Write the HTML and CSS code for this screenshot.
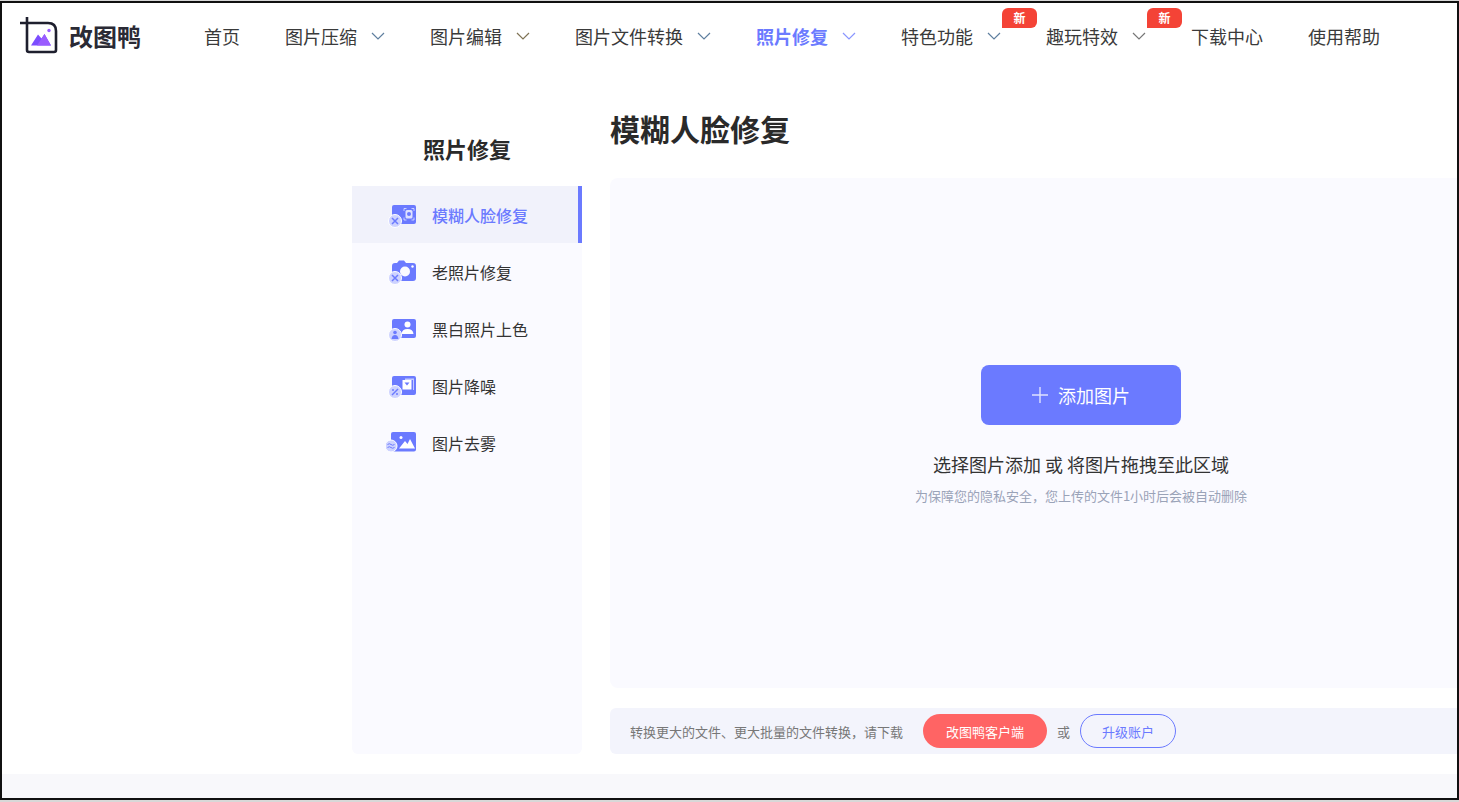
FILE: index.html
```html
<!DOCTYPE html>
<html lang="zh-CN">
<head>
<meta charset="utf-8">
<title>改图鸭 - 模糊人脸修复</title>
<link rel="stylesheet" href="styles.css">
</head>
<body>
<div class="frame">
  <header class="header">
    <a class="logo">
      <svg class="logo-icon" width="38" height="37" viewBox="0 0 38 37">
        <path d="M0 6H28Q36 6 36 14V33Q36 35 34 35H9Q7 35 7 33V0" fill="none" stroke="#1e1f2e" stroke-width="2.6"/>
        <path d="M11 28.500L18 17.500L21.500 21.500L24.500 17L31 28.500Z" fill="#7c4dff"/>
        <path d="M17 28.500L24.500 17L31 28.500Z" fill="#9a5cff"/>
        <circle cx="29" cy="13.500" r="1.700" fill="#9a5cff"/>
      </svg>
      <span class="logo-text">改图鸭</span>
    </a>
    <nav class="nav">
      <a class="nav-item">首页</a>
      <a class="nav-item has-caret">图片压缩<svg class="caret" width="14" height="8" viewBox="0 0 14 8"><path d="M1 1L7 7L13 1" fill="none" stroke="#5f7f9f" stroke-width="1.200"/></svg></a>
      <a class="nav-item has-caret">图片编辑<svg class="caret" width="14" height="8" viewBox="0 0 14 8"><path d="M1 1L7 7L13 1" fill="none" stroke="#7f7355" stroke-width="1.200"/></svg></a>
      <a class="nav-item has-caret">图片文件转换<svg class="caret" width="14" height="8" viewBox="0 0 14 8"><path d="M1 1L7 7L13 1" fill="none" stroke="#5f7f9f" stroke-width="1.200"/></svg></a>
      <a class="nav-item has-caret is-active">照片修复<svg class="caret" width="14" height="8" viewBox="0 0 14 8"><path d="M1 1L7 7L13 1" fill="none" stroke="#8a96ff" stroke-width="1.200"/></svg></a>
      <a class="nav-item has-caret">特色功能<svg class="caret" width="14" height="8" viewBox="0 0 14 8"><path d="M1 1L7 7L13 1" fill="none" stroke="#5f7f9f" stroke-width="1.200"/></svg><span class="badge">新</span></a>
      <a class="nav-item has-caret">趣玩特效<svg class="caret" width="14" height="8" viewBox="0 0 14 8"><path d="M1 1L7 7L13 1" fill="none" stroke="#777" stroke-width="1.200"/></svg><span class="badge">新</span></a>
      <a class="nav-item">下载中心</a>
      <a class="nav-item">使用帮助</a>
    </nav>
  </header>

  <div class="content">
    <aside class="side">
      <h2 class="side-title">照片修复</h2>
      <ul class="side-list">
        <li class="side-item is-current">
          <svg class="side-icon" width="32" height="26" viewBox="0 0 32 26">
            <rect x="6" y="3" width="24" height="19" rx="2" fill="#6b7aff"/>
            <path d="M18 9V6.500H20.500M25.500 6.500H28V9M28 15.500V18H25.500M20.500 18H18V15.500" fill="none" stroke="#fff" stroke-width=".8" opacity=".8"/>
            <rect x="19.500" y="8" width="7" height="8.500" rx="1.500" fill="#dfe2ff"/>
            <circle cx="23" cy="12" r="2" fill="#6b7aff"/>
            <circle cx="9" cy="19" r="6.500" fill="#cdd2ff" stroke="#fff" stroke-width="1"/>
            <path d="M6 16L12 22M12 16L6 22" stroke="#6b7aff" stroke-width="1.500"/>
          </svg>
          <span>模糊人脸修复</span>
        </li>
        <li class="side-item">
          <svg class="side-icon" width="32" height="26" viewBox="0 0 32 26">
            <path d="M6 7Q6 4 9 4H11L13 1.500H18L20 4H27Q30 4 30 7V19Q30 22 27 22H8Q6 22 6 20Z" fill="#6b7aff"/>
            <circle cx="19" cy="12.500" r="5" fill="#fafaff"/>
            <circle cx="26.500" cy="7.500" r="1.200" fill="#fff"/>
            <circle cx="9" cy="19" r="6.500" fill="#cdd2ff" stroke="#fff" stroke-width="1"/>
            <path d="M6 16L12 22M12 16L6 22" stroke="#6b7aff" stroke-width="1.500"/>
          </svg>
          <span>老照片修复</span>
        </li>
        <li class="side-item">
          <svg class="side-icon" width="32" height="26" viewBox="0 0 32 26">
            <rect x="6" y="3" width="24" height="19" rx="2" fill="#6b7aff"/>
            <circle cx="21.500" cy="8.500" r="3" fill="#fff"/>
            <path d="M15.500 18Q16 13 21.500 13Q27 13 27.500 18Z" fill="#fff"/>
            <circle cx="9" cy="19" r="6.500" fill="#cdd2ff" stroke="#fff" stroke-width="1"/>
            <circle cx="9" cy="16.500" r="1.800" fill="#6b7aff"/>
            <path d="M5.500 23Q6 19 9 19Q12 19 12.500 23Z" fill="#6b7aff"/>
          </svg>
          <span>黑白照片上色</span>
        </li>
        <li class="side-item">
          <svg class="side-icon" width="32" height="26" viewBox="0 0 32 26">
            <rect x="6" y="3" width="24" height="19" rx="2" fill="#6b7aff"/>
            <path d="M19 5.500H28V17H27V7H19Z" fill="#fff" opacity=".6"/>
            <rect x="16.500" y="7" width="9" height="9.500" fill="#fff"/>
            <path d="M18.500 9.500H23.500L21 12.500Z" fill="#6b7aff"/>
            <circle cx="9" cy="19" r="6.500" fill="#cdd2ff" stroke="#fff" stroke-width="1"/>
            <path d="M6 22L12 16" stroke="#6b7aff" stroke-width="1.500"/>
            <circle cx="7" cy="17" r="1" fill="#6b7aff"/>
            <circle cx="11" cy="21" r="1" fill="#6b7aff"/>
          </svg>
          <span>图片降噪</span>
        </li>
        <li class="side-item">
          <svg class="side-icon" width="32" height="26" viewBox="0 0 32 26">
            <rect x="5" y="2" width="25" height="19.500" rx="2" fill="#6b7aff"/>
            <path d="M13 18.500L19 11L21.500 14L24 9L29 18.500Z" fill="#fff"/>
            <circle cx="15" cy="7.500" r="1.500" fill="#fff"/>
            <circle cx="5" cy="16" r="6" fill="#cdd2ff" stroke="#fff" stroke-width="1"/>
            <path d="M1.500 14.500Q3.500 13 5 14.500T8.500 14.500M1.500 17.500Q3.500 16 5 17.500T8.500 17.500" fill="none" stroke="#6b7aff" stroke-width="1"/>
          </svg>
          <span>图片去雾</span>
        </li>
      </ul>
    </aside>

    <main class="main">
      <h1 class="title">模糊人脸修复</h1>
      <section class="upload">
        <button class="add-btn" type="button">
          <svg width="16" height="16" viewBox="0 0 16 16"><path d="M8 0V16M0 8H16" stroke="#dfe2ff" stroke-width="1.400"/></svg>
          <span>添加图片</span>
        </button>
        <p class="upload-tip">选择图片添加 或 将图片拖拽至此区域</p>
        <p class="upload-note">为保障您的隐私安全，您上传的文件1小时后会被自动删除</p>
      </section>
      <section class="promo">
        <span class="promo-text">转换更大的文件、更大批量的文件转换，请下载</span>
        <a class="promo-client">改图鸭客户端</a>
        <span class="promo-or">或</span>
        <a class="promo-upgrade">升级账户</a>
      </section>
    </main>
  </div>

  <footer class="footer"></footer>
</div>
</body>
</html>
```

FILE: styles.css
```css
* { box-sizing: border-box; }

html, body {
  margin: 0;
  height: 100%;
  background: #d8d8d8;
  overflow: hidden;
}

body {
  padding-top: 1px;
  font-family: "Noto Sans CJK SC", "Noto Sans", sans-serif;
  color: #333;
}

.frame {
  display: flex;
  flex-direction: column;
  height: 799px;
  border: 2px solid #111;
  background: #fff;
  overflow: hidden;
}

.header {
  display: flex;
  align-items: center;
  height: 65px;
  padding-left: 18px;
  flex-shrink: 0;
}

.logo {
  display: flex;
  align-items: center;
  gap: 11px;
  width: 184px;
  flex-shrink: 0;
}

.logo-icon { flex-shrink: 0; }

.logo-text {
  font-size: 24px;
  font-weight: 700;
  line-height: 1;
  color: #2a2a35;
}

.nav {
  display: flex;
  align-items: center;
  gap: 45px;
  white-space: nowrap;
}

.nav-item {
  position: relative;
  display: flex;
  align-items: center;
  font-size: 18px;
  line-height: 26px;
  color: #3a3a3a;
}

.has-caret { padding-right: 28px; }

.caret {
  position: absolute;
  right: 0;
  top: 9px;
}

.is-active {
  color: #6b7aff;
  font-weight: 700;
}

.badge {
  position: absolute;
  top: -15px;
  right: -36px;
  width: 35px;
  height: 20px;
  border-radius: 6px 6px 6px 0;
  background: #f44336;
  color: #fff;
  font-size: 12px;
  font-weight: 700;
  line-height: 20px;
  text-align: center;
}

.content {
  display: flex;
  gap: 28px;
  width: 1200px;
  margin-left: 350px;
  padding-top: 40px;
  flex-shrink: 0;
}

.side {
  display: flex;
  flex-direction: column;
  width: 230px;
  padding-top: 20px;
  flex-shrink: 0;
}

.side-title {
  margin: 0 0 18px;
  font-size: 22px;
  font-weight: 700;
  line-height: 40px;
  text-align: center;
  color: #2a2a2a;
}

.side-list {
  flex: 1;
  margin: 0;
  padding: 0;
  list-style: none;
  background: #fafaff;
  border-radius: 0 0 6px 6px;
}

.side-item {
  display: flex;
  align-items: center;
  gap: 14px;
  height: 57px;
  padding-left: 34px;
  font-size: 16px;
  color: #333;
}

.side-icon { flex-shrink: 0; }

.is-current {
  background: #f1f2fb;
  border-right: 4px solid #6b7aff;
  color: #6b7aff;
  font-weight: 500;
}

.main {
  width: 942px;
  flex-shrink: 0;
}

.title {
  margin: 0 0 30px;
  font-size: 30px;
  font-weight: 700;
  line-height: 40px;
  color: #2a2a2a;
}

.upload {
  display: flex;
  flex-direction: column;
  align-items: center;
  justify-content: center;
  height: 510px;
  border-radius: 8px;
  background: #fafaff;
}

.add-btn {
  display: flex;
  align-items: center;
  justify-content: center;
  gap: 10px;
  width: 200px;
  height: 60px;
  margin-top: 3px;
  border: 0;
  border-radius: 8px;
  background: #6b7aff;
  color: #fff;
  font-family: inherit;
  font-size: 18px;
}

.upload-tip {
  margin: 26px 0 0;
  font-size: 18px;
  line-height: 26px;
  color: #333;
}

.upload-note {
  margin: 10px 0 0;
  font-size: 13px;
  line-height: 18px;
  color: #9aa3b8;
}

.promo {
  display: flex;
  align-items: center;
  height: 46px;
  margin-top: 20px;
  padding-left: 20px;
  border-radius: 6px;
  background: #f3f4fc;
  font-size: 13px;
  color: #777;
}

.promo-client {
  display: flex;
  align-items: center;
  justify-content: center;
  width: 124px;
  height: 34px;
  margin-left: 20px;
  border-radius: 17px;
  background: #ff6464;
  color: #fff;
}

.promo-or { margin: 0 10px; }

.promo-upgrade {
  display: flex;
  align-items: center;
  justify-content: center;
  width: 96px;
  height: 34px;
  border: 1px solid #6b7aff;
  border-radius: 17px;
  color: #6b7aff;
}

.footer {
  flex: 1;
  margin-top: 20px;
  background: #f8f8fb;
}
```
